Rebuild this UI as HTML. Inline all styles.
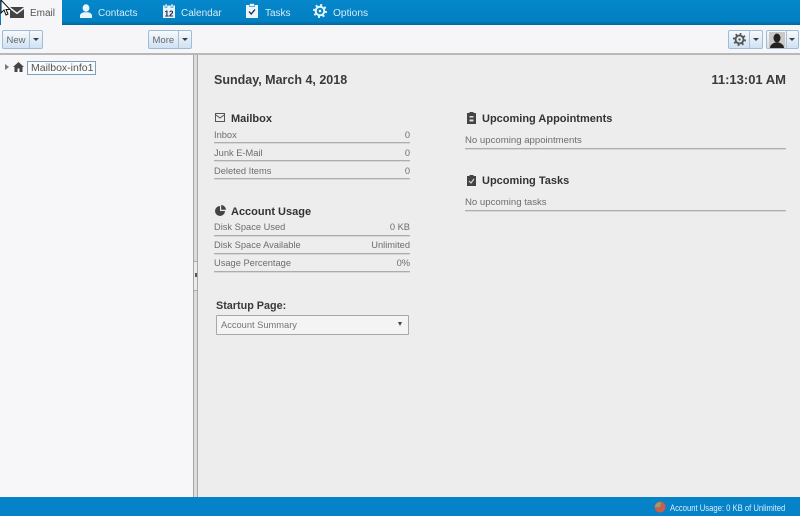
<!DOCTYPE html>
<html>
<head>
<meta charset="utf-8">
<style>
html,body{margin:0;padding:0}
body{width:800px;height:516px;position:relative;overflow:hidden;background:#ededee;font-family:"Liberation Sans",sans-serif;color:#666;filter:blur(.35px)}
.a{position:absolute;white-space:nowrap}
.tab{font-size:10px;color:#d5ecf8;top:7px;line-height:13px}
.btn{position:absolute;top:30px;height:19px;box-sizing:border-box;border:1px solid #9fbcd6;border-radius:2px;background:linear-gradient(#f7f9fc,#cfe2f4);font-size:9.5px;color:#666;line-height:19px}
.sep{position:absolute;top:0;bottom:0;width:1px;background:#aebfd0}
.car{position:absolute;width:0;height:0;border-left:3.5px solid transparent;border-right:3.5px solid transparent;border-top:3.5px solid #3a3f45}
.h{font-size:11px;font-weight:bold;color:#333;line-height:13px}
.l{font-size:9.3px;color:#6d6d6d;line-height:12px}
.line{position:absolute;height:1px;background:#adadad;border-bottom:1px solid #d8d8d8}
</style>
</head>
<body>
<!-- top bar -->
<div class="a" style="left:0;top:0;width:800px;height:25px;background:linear-gradient(#0587cb,#0280c2 85%,#01659e)"></div>
<div class="a" style="left:1px;top:0;width:61px;height:26px;background:#f6f6f8"></div>
<div class="a" style="left:0;top:25px;width:800px;height:29px;background:#f6f6f9"></div>
<div class="a" style="left:0;top:53px;width:800px;height:2px;background:#b8b8b8"></div>

<!-- tabs -->
<svg class="a" style="left:10px;top:7px" width="14" height="11" viewBox="0 0 14 11"><path d="M0 0h14L7 5.500z" fill="#444"/><path d="M0 2l7 5.200L14 2v9H0z" fill="#444"/></svg>
<div class="a tab" style="left:30px;color:#555">Email</div>
<svg class="a" style="left:79px;top:4px" width="14" height="14" viewBox="0 0 14 14" fill="#e9f5fb"><ellipse cx="7" cy="4" rx="3.400" ry="3.800"/><path d="M1 14v-2.500c0-2 2.500-3 4-3.300h4c1.500.3 4 1.300 4 3.300V14z"/></svg>
<div class="a tab" style="left:98px">Contacts</div>
<svg class="a" style="left:163px;top:4px" width="12" height="14" viewBox="0 0 12 14"><rect x="0" y="1.500" width="12" height="12.500" fill="#e9f5fb"/><rect x="2" y="0" width="2" height="3.500" fill="#e9f5fb" stroke="#0582c4" stroke-width=".5"/><rect x="8" y="0" width="2" height="3.500" fill="#e9f5fb" stroke="#0582c4" stroke-width=".5"/><text x="6" y="12.500" text-anchor="middle" font-family="Liberation Sans" font-size="8" font-weight="bold" fill="#224">12</text></svg>
<div class="a tab" style="left:181px">Calendar</div>
<svg class="a" style="left:246px;top:3px" width="12" height="15" viewBox="0 0 12 15"><rect x="0" y="2" width="12" height="13" fill="#e9f5fb"/><rect x="3.500" y="0.500" width="5" height="3" fill="#e9f5fb" stroke="#0582c4" stroke-width=".6"/><path d="M3 8.500l2.200 2.500L9 6.500" fill="none" stroke="#224" stroke-width="1.300"/></svg>
<div class="a tab" style="left:265px">Tasks</div>
<svg class="a" style="left:313px;top:4px" width="14" height="14" viewBox="0 0 14 14"><circle cx="7" cy="7" r="4.300" fill="none" stroke="#e9f5fb" stroke-width="2"/><circle cx="7" cy="7" r="6" fill="none" stroke="#e9f5fb" stroke-width="2" stroke-dasharray="2 2.710"/><circle cx="7" cy="7" r="1.300" fill="#e9f5fb"/></svg>
<div class="a tab" style="left:333px;font-size:10.200px">Options</div>

<!-- cursor -->
<svg class="a" style="left:0;top:0" width="11" height="16" viewBox="0 0 11 16"><path d="M1 0v13l3-3 2 5 2-1-2-4.500h4z" fill="#fff" stroke="#111" stroke-width="1"/></svg>

<!-- toolbar -->
<div class="btn" style="left:2px;width:41px"><span style="position:absolute;left:3.500px;font-size:9.500px">New</span><div class="sep" style="left:26px"></div><div class="car" style="left:30px;top:7px"></div></div>
<div class="btn" style="left:148px;width:44px"><span style="position:absolute;left:3.500px;font-size:9.500px">More</span><div class="sep" style="left:29px"></div><div class="car" style="left:33px;top:7px"></div></div>
<div class="btn" style="left:728px;width:35px"><div class="sep" style="left:20px"></div><div class="car" style="left:24px;top:7px"></div>
<svg class="a" style="left:4px;top:2px" width="13" height="13" viewBox="0 0 14 14"><circle cx="7" cy="7" r="4.300" fill="none" stroke="#555" stroke-width="2"/><circle cx="7" cy="7" r="6" fill="none" stroke="#555" stroke-width="2" stroke-dasharray="2 2.710"/><circle cx="7" cy="7" r="1.300" fill="#555"/></svg></div>
<div class="btn" style="left:766px;width:33px"><div class="sep" style="left:19px"></div><div class="car" style="left:22px;top:7px"></div>
<svg class="a" style="left:2px;top:1px" width="16" height="16" viewBox="0 0 16 16"><rect width="16" height="16" fill="#c9c9c9"/><ellipse cx="8" cy="6" rx="3.500" ry="4.500" fill="#222"/><path d="M1 16c0-3.500 3-4.500 5-5.500h4c2 1 5 2 5 5.500z" fill="#222"/></svg></div>

<!-- left panel -->
<div class="a" style="left:0;top:55px;width:193px;height:442px;background:#f7f7fa"></div>
<div class="a" style="left:193px;top:55px;width:5px;height:442px;background:#dcdcdc;border-left:1px solid #a8a8a8;border-right:1px solid #a8a8a8;box-sizing:border-box"></div>
<div class="a" style="left:194px;top:261px;width:3px;height:28px;background:#ececec;border-top:1px solid #aaa;border-bottom:1px solid #aaa"></div>
<div class="a" style="left:195px;top:273px;width:2px;height:4px;background:#555"></div>
<div class="a" style="left:5px;top:64px;width:0;height:0;border-top:3px solid transparent;border-bottom:3px solid transparent;border-left:4px solid #777"></div>
<svg class="a" style="left:13px;top:62px" width="11" height="10" viewBox="0 0 11 10"><path d="M5.500 0L0 5h1.500v5h3V6.500h2V10h3V5H11z" fill="#444"/></svg>
<div class="a" style="left:27px;top:61px;width:69px;height:14px;box-sizing:border-box;border:1px solid #7d9fbd;background:#f8fafc;font-size:10.500px;line-height:13px;padding-left:3px;color:#555">Mailbox-info1</div>

<!-- main -->
<div class="a" style="left:214px;top:73px;font-size:12.500px;font-weight:bold;color:#3a3a3a;line-height:15px">Sunday, March 4, 2018</div>
<div class="a" style="right:14px;top:72px;font-size:13px;font-weight:bold;color:#3a3a3a;line-height:15px">11:13:01 AM</div>

<svg class="a" style="left:215px;top:113px" width="10" height="9" viewBox="0 0 10 9"><rect x=".5" y=".5" width="9" height="8" fill="none" stroke="#555"/><path d="M1 2l4 3 4-3" fill="none" stroke="#555"/></svg>
<div class="a h" style="left:231px;top:113px">Mailbox</div>
<div class="a l" style="left:214px;top:129px">Inbox</div><div class="a l" style="right:390px;top:129px">0</div><div class="line" style="left:214px;top:142px;width:196px"></div>
<div class="a l" style="left:214px;top:147px">Junk E-Mail</div><div class="a l" style="right:390px;top:147px">0</div><div class="line" style="left:214px;top:160px;width:196px"></div>
<div class="a l" style="left:214px;top:165px">Deleted Items</div><div class="a l" style="right:390px;top:165px">0</div><div class="line" style="left:214px;top:178px;width:196px"></div>

<svg class="a" style="left:215px;top:205px" width="11" height="11" viewBox="0 0 11 11"><path d="M5 1a5 5 0 1 0 5 5H5z" fill="#444"/><path d="M6.200 0v4.800H11A5 5 0 0 0 6.200 0z" fill="#444"/></svg>
<div class="a h" style="left:231px;top:206px">Account Usage</div>
<div class="a l" style="left:214px;top:221px">Disk Space Used</div><div class="a l" style="right:390px;top:221px">0 KB</div><div class="line" style="left:214px;top:235px;width:196px"></div>
<div class="a l" style="left:214px;top:239px">Disk Space Available</div><div class="a l" style="right:390px;top:239px">Unlimited</div><div class="line" style="left:214px;top:253px;width:196px"></div>
<div class="a l" style="left:214px;top:257px">Usage Percentage</div><div class="a l" style="right:390px;top:257px">0%</div><div class="line" style="left:214px;top:271px;width:196px"></div>

<div class="a" style="left:216px;top:300px;font-size:10.800px;font-weight:bold;color:#3a3a3a;line-height:13px">Startup Page:</div>
<div class="a" style="left:216px;top:315px;width:193px;height:20px;box-sizing:border-box;border:1px solid #a8a8a8;border-radius:1px;background:#f4f4f5;font-size:9.300px;line-height:19px;padding-left:4px;color:#757575">Account Summary</div>
<div class="a" style="left:398px;top:322px;width:0;height:0;border-left:2.500px solid transparent;border-right:2.500px solid transparent;border-top:4px solid #444"></div>

<svg class="a" style="left:467px;top:112px" width="9" height="12" viewBox="0 0 9 12"><rect y="1" width="9" height="11" fill="#444"/><rect x="2.500" width="4" height="2" fill="#444"/><rect x="2.500" y="4" width="4" height="1.500" fill="#ddd"/><rect x="2.500" y="7.500" width="4" height="2" fill="#ddd"/></svg>
<div class="a h" style="left:482px;top:113px">Upcoming Appointments</div>
<div class="a l" style="left:465px;top:135px;font-size:9.600px">No upcoming appointments</div>
<div class="line" style="left:465px;top:148px;width:321px"></div>

<svg class="a" style="left:467px;top:175px" width="9" height="11" viewBox="0 0 9 11"><rect y="1" width="9" height="10" fill="#444"/><rect x="2.500" width="4" height="2" fill="#444"/><path d="M2 6l2 2 3-4" fill="none" stroke="#ddd" stroke-width="1.100"/></svg>
<div class="a h" style="left:482px;top:175px">Upcoming Tasks</div>
<div class="a l" style="left:465px;top:197px;font-size:9.600px">No upcoming tasks</div>
<div class="line" style="left:465px;top:210px;width:321px"></div>

<!-- status bar -->
<div class="a" style="left:0;top:497px;width:800px;height:19px;background:#0582c8"></div>
<svg class="a" style="left:654px;top:501px" width="12" height="12" viewBox="0 0 12 12"><circle cx="6" cy="6" r="5.500" fill="#c8604a"/><path d="M1 6a5 5 0 0 1 6-4.500L6 6z" fill="#8fa27a"/></svg>
<div class="a" style="left:670px;top:502px;font-size:9px;line-height:12px;color:#d8eef9;transform:scaleX(.85);transform-origin:0 0">Account Usage: 0 KB of Unlimited</div>
</body>
</html>
